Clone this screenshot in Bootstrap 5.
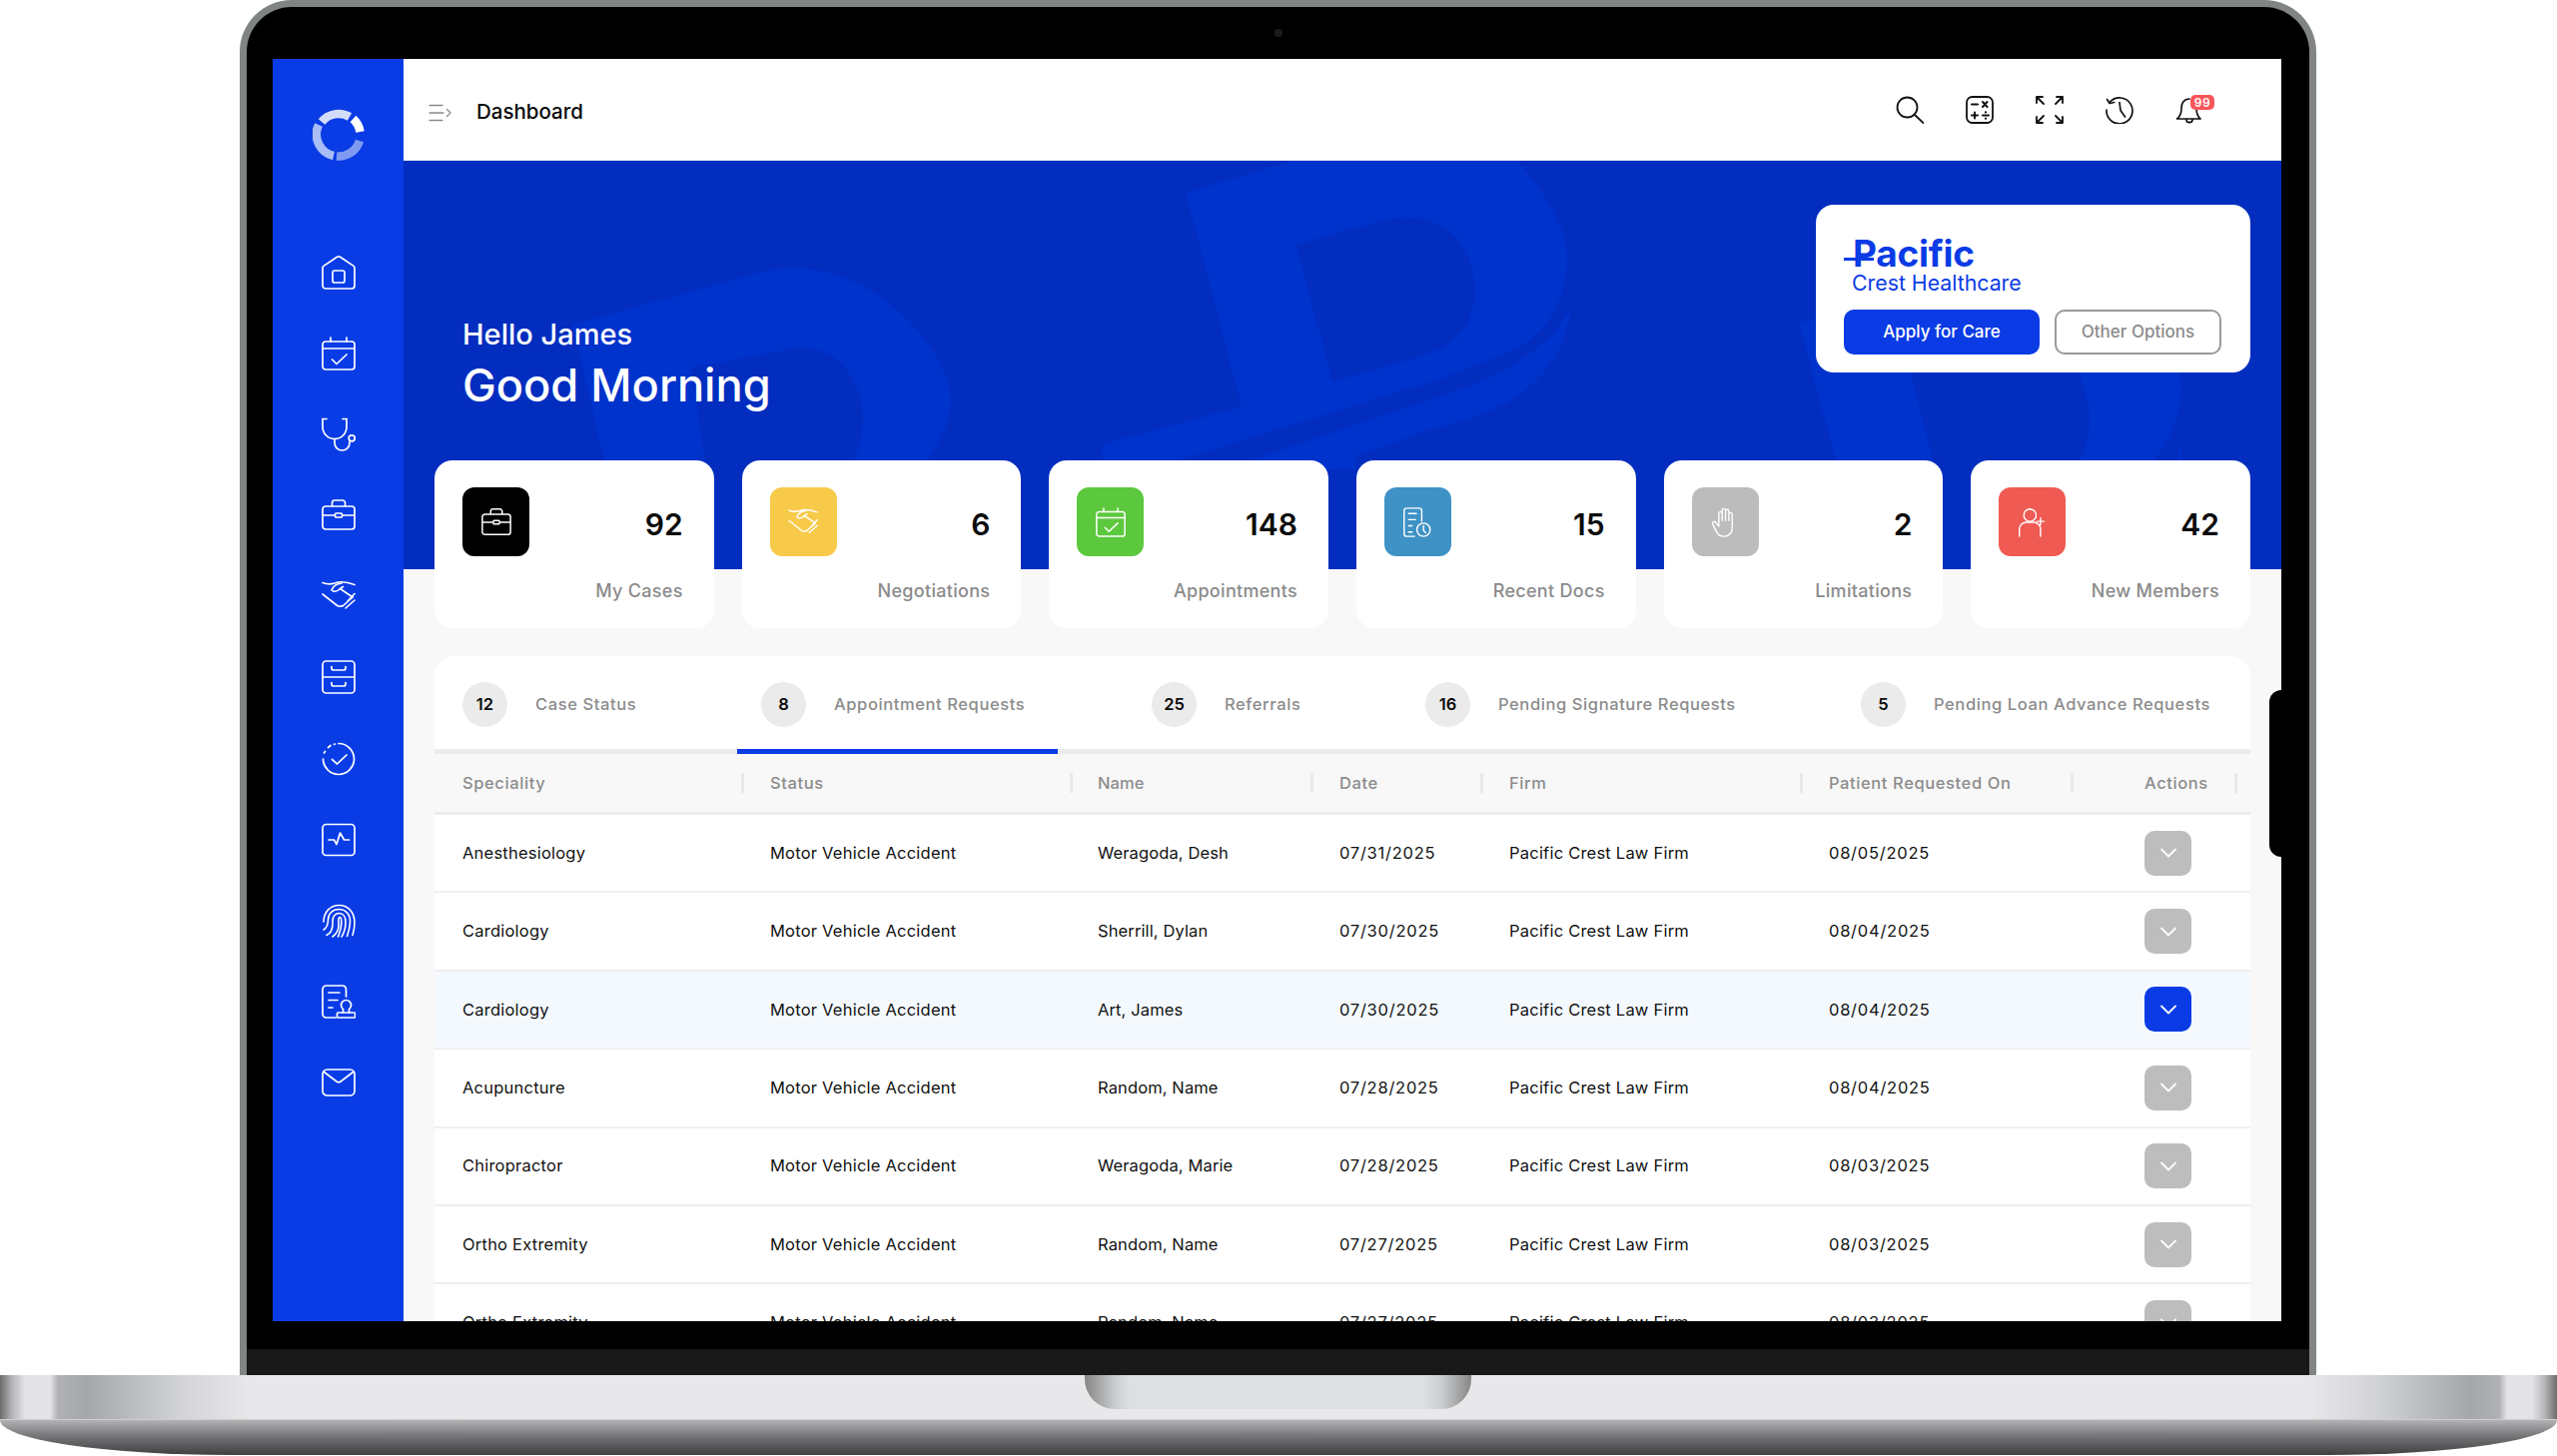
<!DOCTYPE html>
<html lang="en">
<head>
<meta charset="utf-8">
<title>Dashboard</title>
<link href="https://cdn.jsdelivr.net/npm/bootstrap@5.3.0/dist/css/bootstrap.min.css" rel="stylesheet">
<style>
html,body{width:2560px;height:1458px;overflow:hidden;background:#fff;font-family:Inter,"Liberation Sans",sans-serif}
.lid{margin:0 241px 0 240px;height:1377px;background:#000;border:7px solid #808485;border-bottom:0;border-radius:52px 52px 0 0;display:flex;flex-direction:column}
.lid-top{height:52px;flex:none}
.cam{width:8px;height:8px;background:#1c1c1c}
.scr{height:1264px;margin:0 28px 0 26px;overflow:hidden;position:relative;background:#f8f8f8;flex:none}
.lid-gap{height:28px;flex:none}
.lid-low{height:26px;background:#181818;flex:none}
.side-tab{position:absolute;right:0;top:632px;width:12px;height:167px;background:#000;border-radius:12px 0 0 12px;z-index:5}
.rail{width:131px;background:#0a3ce6;color:#fff;flex:none}
.rail-logo{width:52px;height:52px;margin-top:50px;margin-bottom:95px}
.rail-ico{width:34px;height:34px;display:block;margin-bottom:47.1px}
.dash{flex:1 1 0;min-width:0}
.topbar{height:102px;background:#fff;padding:0 62px 0 25px;border-bottom:1px solid #dfe5f5}
.crumb-box{margin-top:6px}
.crumb{font-size:20.5px;font-weight:500;color:#0b0b0b;margin-left:25px}
.top-ico{width:28px;height:28px;display:block;color:#111}
.top-acts{gap:42px}
.bell-wrap{position:relative;width:28px;height:28px;margin-right:16px}
.bell-num{position:absolute;left:15px;top:-1px;width:24px;height:15px;background:#f9545a;color:#fff;font-size:12px;line-height:15px;font-weight:600;border-radius:5px;text-align:center;letter-spacing:.5px}
.hero{height:409px;background:#022dbf;position:relative;padding:44px 31px 0 59px}
.hero-art{position:absolute;left:0;top:0;width:1880px;height:409px}
.hero-art path{fill:#0032cc}
.greet{position:relative;color:#fff;margin-top:113px}
.greet-a{font-size:29px;line-height:34px;font-weight:500}
.greet-b{font-size:45.2px;line-height:54px;font-weight:500;margin-top:7px}
.plan{position:relative;width:435px;height:168px;background:#fff;border-radius:18px;padding:32px 29px 0 28px}
.plan-mark{position:relative;color:#0a3be5;font-size:37px;line-height:34px;font-weight:700;padding-left:9px;letter-spacing:-.25px}
.plan-mark i{position:absolute;left:0;top:21px;width:30px;height:3px;background:#0a3be5;display:block}
.plan-sub{color:#0a3be5;font-size:21.3px;line-height:24px;padding-left:8px;margin-top:0}
.plan-btns{margin-top:15px;gap:15px}
.btn.plan-go{width:196px;height:45px;background:#0a3be5;border:0;color:#fff;font-size:17px;font-weight:500;border-radius:10px;padding:0}
.btn.plan-alt{width:167px;height:45px;background:#fff;border:2px solid #9a9a9a;color:#8c8c8c;font-size:17px;font-weight:500;border-radius:10px;padding:0}
.body-pad{padding:0 31px;position:relative;margin-top:-109px}
.tiles{display:grid;grid-template-columns:repeat(6,1fr);gap:28px}
.tile{height:168px;background:#fff;border-radius:18px;padding:27px 31px 0 28px}
.tile-ico{width:67px;height:69px;border-radius:12px;color:#fff}
.tile-ico svg{width:30px;height:30px}
.tile-num{font-size:30px;font-weight:600;line-height:36px;color:#0b0b0b;margin-top:4px}
.tile-lab{font-size:18px;font-weight:500;letter-spacing:.3px;color:#8b8b8b;text-align:right;margin-top:23px;line-height:24px}
.panel{margin-top:28px;background:#fff;border-radius:20px 20px 0 0}
.tabrow{height:98px;border-bottom:5px solid #ececec;gap:70px}
.tabi{height:98px;margin-bottom:-5px;border-bottom:5px solid transparent;padding-top:4px;padding-left:24px;color:#8c8c8c;font-size:16.5px;letter-spacing:.6px;font-weight:500;display:flex;align-items:center;flex:none}
.tabi:nth-child(1){width:233px;padding-left:28px}
.tabi:nth-child(2){width:321px}
.tabi:nth-child(3){width:204px}
.tabi:nth-child(4){width:366px}
.tabi:nth-child(5){width:413px}
.tabi.on{border-bottom-color:#0a3be5}
.tab-n{width:45px;height:45px;background:#ebebeb;color:#0b0b0b;font-weight:600;margin-right:28px;flex:none;letter-spacing:0}
.grid-t{table-layout:fixed;width:1818px;margin:0;--bs-table-bg:transparent;border-collapse:separate;border-spacing:0}
.grid-t th{height:61px;background:#f8f8f8;color:#8c8c8c;font-size:16.5px;letter-spacing:.6px;font-weight:500;padding:0 0 0 26px;border-bottom:3px solid #ececec;position:relative;vertical-align:middle}
.grid-t th::after{content:"";position:absolute;right:0;top:19px;width:3px;height:20px;background:#e9e9e9}
.grid-t th:first-child,.grid-t td:first-child{padding-left:28px}
.grid-t th:nth-child(3),.grid-t td:nth-child(3){padding-left:25px;letter-spacing:.12px}
.grid-t th:last-child,.grid-t td:last-child{padding-left:71px}
.grid-t th:last-child::after{right:13px}
.grid-t td{height:78.4px;font-size:16.5px;letter-spacing:.22px;color:#111;padding:0 0 0 26px;vertical-align:middle;border-bottom:2px solid #f0eef0}
.grid-t td:nth-child(4),.grid-t td:nth-child(6){letter-spacing:.75px}
.grid-t tr.picked td{background:#f4f9fe}
.drop{width:47px;height:45px;border-radius:10px;background:#bdbdbd;border:0;padding:0;color:#fff}
.picked .drop{background:#0a3be5}
.drop svg{width:18px;height:12px}
.deck{height:45px;background:linear-gradient(90deg,#6a6a6a 0,#b5b5b8 12px,#e2e2e8 25px,#e4e4e8 50px,#b0b1b5 58px,#a6a7ab 87px,#d2d3d6 180px,#e8e8ea 250px,#e8e8ea 2310px,#d2d3d6 2380px,#a6a7ab 2473px,#b0b1b5 2502px,#e4e4e8 2510px,#e2e2e8 2535px,#b5b5b8 2548px,#6a6a6a 2560px);position:relative;border-bottom:1px solid #cfcfd2}
.hinge{position:absolute;left:1086px;top:0;width:387px;height:34px;border-radius:0 0 30px 30px;background:linear-gradient(90deg,#868686 0,#c9cbcd 30px,#dde0e3 45px,#dde0e3 340px,#c9cbcd 358px,#868686 100%)}
.lip{height:35px;background:linear-gradient(180deg,#b3b3b5 0,#77777a 45%,#3f3f42 100%);border-radius:0 0 230px 230px/0 0 35px 35px}
</style>
</head>
<body>
<svg width="0" height="0" class="position-absolute" aria-hidden="true">
<defs>
<g id="i-home" fill="none" stroke="currentColor" stroke-width="1.7" stroke-linejoin="round" stroke-linecap="round"><path d="M1 12.5a3 3 0 0 1 1.300-2.400L15.500 1.300a3 3 0 0 1 3 0L31.700 10.100A3 3 0 0 1 33 12.500V30a3 3 0 0 1-3 3H4a3 3 0 0 1-3-3Z"/><rect x="11" y="15" width="12" height="12" rx="2"/></g>
<g id="i-cal" fill="none" stroke="currentColor" stroke-width="1.7" stroke-linecap="round" stroke-linejoin="round"><rect x="1" y="5" width="32" height="28" rx="3"/><path d="M1 12H33M9 1V5M25 1V5M10.500 23l4.500 4.500L25 18"/></g>
<g id="i-steth" fill="none" stroke="currentColor" stroke-width="1.7" stroke-linecap="round"><path d="M5 1.500H1V9.500a12 12 0 0 0 24 0V1.500H21"/><path d="M13 21.500V25.500a7.500 7.500 0 0 0 15 0V24"/><circle cx="30.200" cy="20.800" r="3"/></g>
<g id="i-case" fill="none" stroke="currentColor" stroke-width="1.7" stroke-linejoin="round"><rect x="1" y="8" width="32" height="23" rx="3"/><path d="M10.500 8V4.500a2.500 2.500 0 0 1 2.500-2.500h8a2.500 2.500 0 0 1 2.500 2.500V8M1 17H13.500M20.500 17H33"/><rect x="13.500" y="15" width="7" height="4" rx="1"/></g>
<g id="i-shake" fill="none" stroke="currentColor" stroke-width="1.600" stroke-linecap="round" stroke-linejoin="round"><path d="M1 3.500C6 5.500 10 5 13 4 18 2 25 2.500 33 5.500"/><path d="M20 4C15 4.500 11.500 7 10 11 13 13.500 16 12 18.500 9.500L31 18"/><path d="M1 15 15 26c2 1.500 4 1.500 5.500 .5M18.500 9.500l3-2"/><path d="M31 18 21 27M33 21 24 29M33 14.500 26 22"/></g>
<g id="i-cab" fill="none" stroke="currentColor" stroke-width="1.700" stroke-linecap="round" stroke-linejoin="round"><rect x="1" y="1" width="32" height="32" rx="3.500"/><path d="M1 17H33M10 6.500V8a2 2 0 0 0 2 2H22a2 2 0 0 0 2-2V6.500M10 22.500V24a2 2 0 0 0 2 2H22a2 2 0 0 0 2-2V22.500"/></g>
<g id="i-done" fill="none" stroke="currentColor" stroke-width="1.700" stroke-linecap="round" stroke-linejoin="round"><path d="M17 1.500A15.500 15.500 0 1 1 1.500 17"/><path d="M2.500 11 3.500 9.500M6.500 5.500 9 3.500M12.500 2.300 13.500 2"/><path d="M10.500 17.500l5 4.500L25 13"/></g>
<g id="i-pulse" fill="none" stroke="currentColor" stroke-width="1.700" stroke-linecap="round" stroke-linejoin="round"><rect x="1" y="1.500" width="32" height="31" rx="3.500"/><path d="M7 17H12.500L15 21.500 18.500 10 22.500 17H27.500"/></g>
<g id="i-print" fill="none" stroke="currentColor" stroke-width="1.600" stroke-linecap="round"><path d="M2 18C2 9 8 1.500 17.500 1.500 27 1.500 33 9 33 19c0 5-1 9-2 12.500"/><path d="M2 26C5 24 6.500 21 6.500 16 6.500 10 11 5.500 17 5.500 24.500 5.500 29 11 28.500 19 28.200 24 27 28 25.500 32.500"/><path d="M5 31.500C9.500 29.500 11.500 24.500 11 17 11 12.500 14 9.500 17.500 9.500 21.500 9.500 24 13 24 18.500 24 24 22.500 29 20 33"/><path d="M11 33C15 30 17 26 17 21.500V16c0-1.500 .5-2.500 1.200-2.500 1 0 1.600 1.500 1.600 4.500 0 6-1.300 10-3.300 15"/></g>
<g id="i-stamp" fill="none" stroke="currentColor" stroke-width="1.700" stroke-linecap="round" stroke-linejoin="round"><path d="M14 33H4.500A3.500 3.500 0 0 1 1 29.500V4.500A3.500 3.500 0 0 1 4.500 1H21A3.500 3.500 0 0 1 24.500 4.500V12"/><path d="M7 8H18M7 15.500H16M7 23H11"/><rect x="15.500" y="28" width="18" height="5" rx="1"/><path d="M21.500 28V24.500A5 5 0 1 1 27.500 24.500V28"/></g>
<g id="i-mail" fill="none" stroke="currentColor" stroke-width="1.700" stroke-linecap="round" stroke-linejoin="round"><rect x="1" y="4" width="32" height="26" rx="4.500"/><path d="M2.500 6.500 15 16a3.500 3.500 0 0 0 4 0L31.500 6.500"/></g>
<g id="i-docclock" fill="none" stroke="currentColor" stroke-width="1.600" stroke-linecap="round" stroke-linejoin="round"><path d="M14 33H5a3 3 0 0 1-3-3V4A3 3 0 0 1 5 1H19A3 3 0 0 1 22 4V16"/><path d="M7 7H16M7 14H15M7 21H11M7 28H11"/><circle cx="24" cy="25.500" r="7.500"/><path d="M24 21V26L26.500 29"/></g>
<g id="i-hand" fill="none" stroke="currentColor" stroke-width="1.600" stroke-linecap="round" stroke-linejoin="round"><path d="M10 17V7a1.900 1.900 0 0 1 3.800 0V15M13.800 15V3.500a1.900 1.900 0 0 1 3.800 0V15M17.600 15V4.500a1.900 1.900 0 0 1 3.800 0V15M21.400 15V8a1.900 1.900 0 0 1 3.800 0V24a9 9 0 0 1-9 9H15C11 33 9 31 7 27L3 19a2 2 0 0 1 3.400-2L10 21.500V17"/></g>
<g id="i-useradd" fill="none" stroke="currentColor" stroke-width="1.600" stroke-linecap="round" stroke-linejoin="round"><circle cx="14" cy="9" r="7"/><path d="M2 33V25a8 8 0 0 1 8-8H18a8 8 0 0 1 8 8V33M26 12V20M22 16H30"/></g>
</defs>
</svg>

<div class="lid">
  <div class="lid-top d-flex justify-content-center align-items-center"><span class="cam rounded-circle d-block"></span></div>
  <div class="scr d-flex">
    <span class="side-tab"></span>
    <nav class="rail d-flex flex-column align-items-center">
      <svg class="rail-logo" viewBox="0 0 52 52" fill="none" stroke-width="8.500"><path d="M9 13A22 22 0 0 1 37 8" stroke="#d3dcfb"/><path d="M40.500 10A22 22 0 0 1 47.500 23" stroke="#fff"/><path d="M47 32A22 22 0 0 1 24 47.500" stroke="#7f9bf1"/><path d="M21 47A22 22 0 0 1 6 16" stroke="#a9bcf6"/></svg>
      <svg class="rail-ico" viewBox="0 0 34 34"><use href="#i-home"/></svg>
      <svg class="rail-ico" viewBox="0 0 34 34"><use href="#i-cal"/></svg>
      <svg class="rail-ico" viewBox="0 0 34 34"><use href="#i-steth"/></svg>
      <svg class="rail-ico" viewBox="0 0 34 34"><use href="#i-case"/></svg>
      <svg class="rail-ico" viewBox="0 0 34 34"><use href="#i-shake"/></svg>
      <svg class="rail-ico" viewBox="0 0 34 34"><use href="#i-cab"/></svg>
      <svg class="rail-ico" viewBox="0 0 34 34"><use href="#i-done"/></svg>
      <svg class="rail-ico" viewBox="0 0 34 34"><use href="#i-pulse"/></svg>
      <svg class="rail-ico" viewBox="0 0 34 34"><use href="#i-print"/></svg>
      <svg class="rail-ico" viewBox="0 0 34 34"><use href="#i-stamp"/></svg>
      <svg class="rail-ico" viewBox="0 0 34 34"><use href="#i-mail"/></svg>
    </nav>
    <main class="dash">
      <header class="topbar d-flex align-items-center justify-content-between">
        <div class="crumb-box d-flex align-items-center">
          <svg width="23" height="18" viewBox="0 0 23 18" fill="none" stroke="#8a8a8a" stroke-width="1.300" stroke-linecap="round" stroke-linejoin="round"><path d="M1 1.500H14M1 9H15M1 16.500H14M18.500 5.500 22 9 18.500 12.500"/></svg>
          <span class="crumb">Dashboard</span>
        </div>
        <div class="top-acts d-flex align-items-center">
          <svg class="top-ico" viewBox="0 0 28 28" fill="none" stroke="currentColor" stroke-width="1.800" stroke-linecap="round"><circle cx="11.500" cy="11.500" r="10"/><path d="M19 19 27.500 27"/></svg>
          <svg class="top-ico" viewBox="0 0 28 28" fill="none" stroke="currentColor" stroke-width="1.800" stroke-linecap="round"><rect x="1" y="1" width="26" height="26" rx="5.500"/><path d="M6 8.500H12M17 6 21.500 11M21.500 6 17 11M6 19.500H12M9 16.500V22.500M17 19.500H23" stroke-width="2"/><path d="M20 16.300V16.400M20 22.600V22.700" stroke-width="2.200"/></svg>
          <svg class="top-ico" viewBox="0 0 28 28" fill="none" stroke="currentColor" stroke-width="1.800" stroke-linecap="round" stroke-linejoin="round"><path d="M1 7V1H7M1 1 8 8M21 1H27V7M27 1 20 8M1 21V27H7M1 27 8 20M21 27H27V21M27 27 20 20"/></svg>
          <svg class="top-ico" viewBox="0 0 28 28" fill="none" stroke="currentColor" stroke-width="1.700" stroke-linecap="round" stroke-linejoin="round"><path d="M4.500 6A13 13 0 1 1 1 14"/><path d="M1.500 3.500 4 7.500 8.700 6.500M14 6.500 15 14.500 19.500 21"/></svg>
          <div class="bell-wrap">
            <svg class="top-ico" viewBox="0 0 28 28" fill="none" stroke="currentColor" stroke-width="1.700" stroke-linecap="round" stroke-linejoin="round"><path d="M14 3C8 3 6 8 6 12.500 6 17 5 20.500 1.500 23H25C22 20.500 21 17 21 12.500M11 24C11 27.500 17 27.500 17 24"/></svg>
            <span class="bell-num">99</span>
          </div>
        </div>
      </header>
      <section class="hero d-flex justify-content-between align-items-start">
        <svg class="hero-art" viewBox="404 161 1880 409" aria-hidden="true">
          <path fill-rule="evenodd" d="M573 325 753 275C830 250 910 300 945 370 962 410 945 440 921 470H607ZM692 368 791 350C835 340 864 380 864 420 864 440 858 450 852 470H707Z"/>
          <path fill-rule="evenodd" d="M1187 193 1330 150H1510C1545 190 1569 225 1569 257 1569 305 1545 335 1518 350L1441 380 1151 470H1105L1103 445 1243 407ZM1298 245 1380 222C1440 205 1476 240 1476 293 1476 330 1450 350 1411 360L1334 382Z"/>
          <path d="M1572 310C1568 360 1530 410 1441 427L1357 457V470H1225L1441 397C1500 378 1550 350 1572 310Z"/>
          <path fill-rule="evenodd" d="M1801 323 2000 270H2120C2170 300 2184 350 2184 390 2184 420 2170 445 2151 470H1840ZM1902 330 1980 310C2050 310 2092 370 2092 420 2092 440 2088 450 2078 470H1938Z"/>
          <path d="M2186 440 2176 470H2183Z"/>
        </svg>
        <div class="greet">
          <div class="greet-a">Hello James</div>
          <div class="greet-b">Good Morning</div>
        </div>
        <div class="plan">
          <div class="plan-mark"><i></i>Pacific</div>
          <div class="plan-sub">Crest Healthcare</div>
          <div class="plan-btns d-flex">
            <button class="btn plan-go" type="button">Apply for Care</button>
            <button class="btn plan-alt" type="button">Other Options</button>
          </div>
        </div>
      </section>
      <div class="body-pad">
        <div class="tiles">
          <div class="tile">
            <div class="d-flex justify-content-between align-items-center"><span class="tile-ico d-flex align-items-center justify-content-center" style="background:#000"><svg viewBox="0 0 34 34"><use href="#i-case"/></svg></span><span class="tile-num">92</span></div>
            <div class="tile-lab">My Cases</div>
          </div>
          <div class="tile">
            <div class="d-flex justify-content-between align-items-center"><span class="tile-ico d-flex align-items-center justify-content-center" style="background:#f8ca4a"><svg viewBox="0 0 34 34"><use href="#i-shake"/></svg></span><span class="tile-num">6</span></div>
            <div class="tile-lab">Negotiations</div>
          </div>
          <div class="tile">
            <div class="d-flex justify-content-between align-items-center"><span class="tile-ico d-flex align-items-center justify-content-center" style="background:#5cc83d"><svg viewBox="0 0 34 34"><use href="#i-cal"/></svg></span><span class="tile-num">148</span></div>
            <div class="tile-lab">Appointments</div>
          </div>
          <div class="tile">
            <div class="d-flex justify-content-between align-items-center"><span class="tile-ico d-flex align-items-center justify-content-center" style="background:#3f92c6"><svg viewBox="0 0 34 34"><use href="#i-docclock"/></svg></span><span class="tile-num">15</span></div>
            <div class="tile-lab">Recent Docs</div>
          </div>
          <div class="tile">
            <div class="d-flex justify-content-between align-items-center"><span class="tile-ico d-flex align-items-center justify-content-center" style="background:#bcbcbc"><svg viewBox="0 0 34 34"><use href="#i-hand"/></svg></span><span class="tile-num">2</span></div>
            <div class="tile-lab">Limitations</div>
          </div>
          <div class="tile">
            <div class="d-flex justify-content-between align-items-center"><span class="tile-ico d-flex align-items-center justify-content-center" style="background:#ef5a53"><svg viewBox="0 0 34 34"><use href="#i-useradd"/></svg></span><span class="tile-num">42</span></div>
            <div class="tile-lab">New Members</div>
          </div>
        </div>
        <div class="panel">
          <div class="tabrow d-flex">
            <div class="tabi"><span class="tab-n rounded-circle d-flex align-items-center justify-content-center">12</span>Case Status</div>
            <div class="tabi on"><span class="tab-n rounded-circle d-flex align-items-center justify-content-center">8</span>Appointment Requests</div>
            <div class="tabi"><span class="tab-n rounded-circle d-flex align-items-center justify-content-center">25</span>Referrals</div>
            <div class="tabi"><span class="tab-n rounded-circle d-flex align-items-center justify-content-center">16</span>Pending Signature Requests</div>
            <div class="tabi"><span class="tab-n rounded-circle d-flex align-items-center justify-content-center">5</span>Pending Loan Advance Requests</div>
          </div>
          <table class="table grid-t">
            <colgroup><col style="width:310px"><col style="width:329px"><col style="width:241px"><col style="width:170px"><col style="width:320px"><col style="width:271px"><col style="width:177px"></colgroup>
            <thead><tr><th>Speciality</th><th>Status</th><th>Name</th><th>Date</th><th>Firm</th><th>Patient Requested On</th><th>Actions</th></tr></thead>
            <tbody>
              <tr><td>Anesthesiology</td><td>Motor Vehicle Accident</td><td>Weragoda, Desh</td><td>07/31/2025</td><td>Pacific Crest Law Firm</td><td>08/05/2025</td><td><button class="drop d-flex align-items-center justify-content-center" type="button" aria-label="Expand"><svg viewBox="0 0 18 12" fill="none" stroke="currentColor" stroke-width="1.800" stroke-linecap="round" stroke-linejoin="round"><path d="M2 2.500 9 9.500 16 2.500"/></svg></button></td></tr>
              <tr><td>Cardiology</td><td>Motor Vehicle Accident</td><td>Sherrill, Dylan</td><td>07/30/2025</td><td>Pacific Crest Law Firm</td><td>08/04/2025</td><td><button class="drop d-flex align-items-center justify-content-center" type="button" aria-label="Expand"><svg viewBox="0 0 18 12" fill="none" stroke="currentColor" stroke-width="1.800" stroke-linecap="round" stroke-linejoin="round"><path d="M2 2.500 9 9.500 16 2.500"/></svg></button></td></tr>
              <tr class="picked"><td>Cardiology</td><td>Motor Vehicle Accident</td><td>Art, James</td><td>07/30/2025</td><td>Pacific Crest Law Firm</td><td>08/04/2025</td><td><button class="drop d-flex align-items-center justify-content-center" type="button" aria-label="Expand"><svg viewBox="0 0 18 12" fill="none" stroke="currentColor" stroke-width="1.800" stroke-linecap="round" stroke-linejoin="round"><path d="M2 2.500 9 9.500 16 2.500"/></svg></button></td></tr>
              <tr><td>Acupuncture</td><td>Motor Vehicle Accident</td><td>Random, Name</td><td>07/28/2025</td><td>Pacific Crest Law Firm</td><td>08/04/2025</td><td><button class="drop d-flex align-items-center justify-content-center" type="button" aria-label="Expand"><svg viewBox="0 0 18 12" fill="none" stroke="currentColor" stroke-width="1.800" stroke-linecap="round" stroke-linejoin="round"><path d="M2 2.500 9 9.500 16 2.500"/></svg></button></td></tr>
              <tr><td>Chiropractor</td><td>Motor Vehicle Accident</td><td>Weragoda, Marie</td><td>07/28/2025</td><td>Pacific Crest Law Firm</td><td>08/03/2025</td><td><button class="drop d-flex align-items-center justify-content-center" type="button" aria-label="Expand"><svg viewBox="0 0 18 12" fill="none" stroke="currentColor" stroke-width="1.800" stroke-linecap="round" stroke-linejoin="round"><path d="M2 2.500 9 9.500 16 2.500"/></svg></button></td></tr>
              <tr><td>Ortho Extremity</td><td>Motor Vehicle Accident</td><td>Random, Name</td><td>07/27/2025</td><td>Pacific Crest Law Firm</td><td>08/03/2025</td><td><button class="drop d-flex align-items-center justify-content-center" type="button" aria-label="Expand"><svg viewBox="0 0 18 12" fill="none" stroke="currentColor" stroke-width="1.800" stroke-linecap="round" stroke-linejoin="round"><path d="M2 2.500 9 9.500 16 2.500"/></svg></button></td></tr>
              <tr><td>Ortho Extremity</td><td>Motor Vehicle Accident</td><td>Random, Name</td><td>07/27/2025</td><td>Pacific Crest Law Firm</td><td>08/03/2025</td><td><button class="drop d-flex align-items-center justify-content-center" type="button" aria-label="Expand"><svg viewBox="0 0 18 12" fill="none" stroke="currentColor" stroke-width="1.800" stroke-linecap="round" stroke-linejoin="round"><path d="M2 2.500 9 9.500 16 2.500"/></svg></button></td></tr>
            </tbody>
          </table>
        </div>
      </div>
    </main>
  </div>
  <div class="lid-gap"></div>
  <div class="lid-low"></div>
</div>
<div class="deck"><span class="hinge"></span></div>
<div class="lip"></div>
<script src="https://cdn.jsdelivr.net/npm/bootstrap@5.3.0/dist/js/bootstrap.bundle.min.js"></script>
</body>
</html>
